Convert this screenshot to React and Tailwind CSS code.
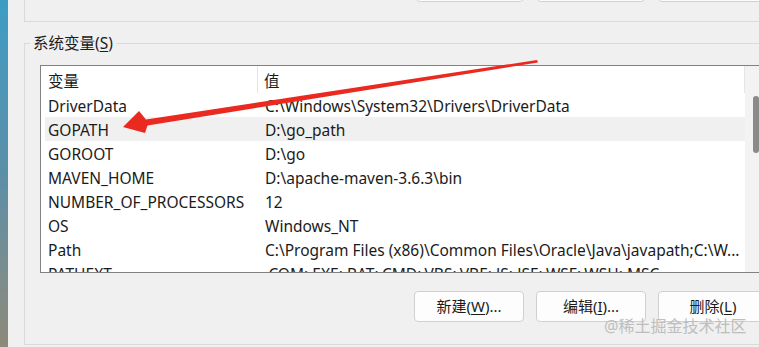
const font = { fontFamily: '"Noto Sans", "Noto Sans CJK SC", sans-serif' };

const rows = [
  ['DriverData', 'C:\\Windows\\System32\\Drivers\\DriverData'],
  ['GOPATH', 'D:\\go_path'],
  ['GOROOT', 'D:\\go'],
  ['MAVEN_HOME', 'D:\\apache-maven-3.6.3\\bin'],
  ['NUMBER_OF_PROCESSORS', '12'],
  ['OS', 'Windows_NT'],
  ['Path', 'C:\\Program Files (x86)\\Common Files\\Oracle\\Java\\javapath;C:\\W...'],
  ['PATHEXT', '.COM;.EXE;.BAT;.CMD;.VBS;.VBE;.JS;.JSE;.WSF;.WSH;.MSC'],
];

const Btn = ({ children }) => (
  <button className="h-[31px] w-[110px] shrink-0 rounded-[4px] border border-[#d0d0d0] bg-[#fdfdfd] text-[15px] text-[#1b1b1b]">
    {children}
  </button>
);

const App = () => {
  return (
    <div className="relative flex h-[347px] w-[759px] overflow-hidden bg-[#f0f0f0]" style={font}>
      {/* wallpaper edge */}
      <div className="w-[8px] shrink-0 bg-gradient-to-b from-[#3c9cc4] via-[#5b8fa8] to-[#8d8a78]" />

      <div className="flex w-[790px] shrink-0 flex-col">
        {/* previous group box (user variables), only its bottom is visible */}
        <div className="ml-[16px] h-[22px] overflow-hidden border-b border-l border-[#dadada]">
          <div className="-mt-[29px] ml-[391px] flex gap-[13px]">
            <div className="h-[31px] w-[108px] rounded-[4px] border border-[#d0d0d0] bg-[#fdfdfd]" />
            <div className="h-[31px] w-[108px] rounded-[4px] border border-[#d0d0d0] bg-[#fdfdfd]" />
            <div className="h-[31px] w-[108px] rounded-[4px] border border-[#d0d0d0] bg-[#fdfdfd]" />
          </div>
        </div>

        {/* system variables group box */}
        <div className="relative ml-[16px] mt-[21px] flex h-[302px] flex-col border border-r-0 border-[#dadada] pl-[15px] pt-[21px]">
          <span className="absolute -top-[12px] left-[5px] bg-[#f0f0f0] px-[3px] text-[15.5px] leading-[22px] text-[#1b1b1b]">
            系统变量(<span className="underline underline-offset-2">S</span>)
          </span>

          <div className="flex h-[208px] border border-r-0 border-[#828282] bg-white">
            <div className="flex w-[704px] shrink-0 flex-col overflow-hidden">
              <div className="flex h-[27px] shrink-0 items-center text-[15.5px] text-[#1b1b1b]">
                <div className="flex h-full w-[217px] items-center border-r border-[#e5e5e5] pl-[7px] pt-[5px]">变量</div>
                <div className="flex h-full flex-1 items-center border-r border-[#e5e5e5] pl-[6px] pt-[5px]">值</div>
              </div>
              <div className="flex flex-col pl-[4px]">
                {rows.map(([k, v]) => (
                  <div
                    key={k}
                    className={`flex h-[24px] shrink-0 items-center whitespace-nowrap pt-[3px] text-[15.5px] text-[#1b1b1b] ${k === 'GOPATH' ? 'bg-[#f0f0f0]' : ''}`}
                  >
                    <div className="w-[213px] shrink-0 pl-[3px]">{k}</div>
                    <div className="pl-[7px]">{v}</div>
                  </div>
                ))}
              </div>
            </div>
            <div className="w-[17px] shrink-0 bg-[#f3f3f3] pl-[8px] pt-[30px]">
              <div className="h-[57px] w-[6px] rounded-[3px] bg-[#8a8a8a]" />
            </div>
          </div>

          <div className="ml-[374px] mt-[18px] flex gap-[12px]">
            <Btn>新建(<span className="underline underline-offset-2">W</span>)...</Btn>
            <Btn>编辑(<span className="underline underline-offset-2">I</span>)...</Btn>
            <Btn>删除(<span className="underline underline-offset-2">L</span>)</Btn>
          </div>
        </div>
      </div>

      {/* red annotation arrow */}
      <svg className="pointer-events-none absolute left-0 top-0" width="759" height="347" viewBox="0 0 759 347">
        <polygon
          points="123,127 145,133 147.5,125.5 538,62.5 537,60 146,119.5 139,111"
          fill="#ea2a20"
        />
      </svg>

      {/* watermark */}
      <span className="pointer-events-none absolute left-[604px] top-[314px] text-[16px] text-[#b9b9b9] opacity-90">
        @稀土掘金技术社区
      </span>
    </div>
  );
};

export default App;
